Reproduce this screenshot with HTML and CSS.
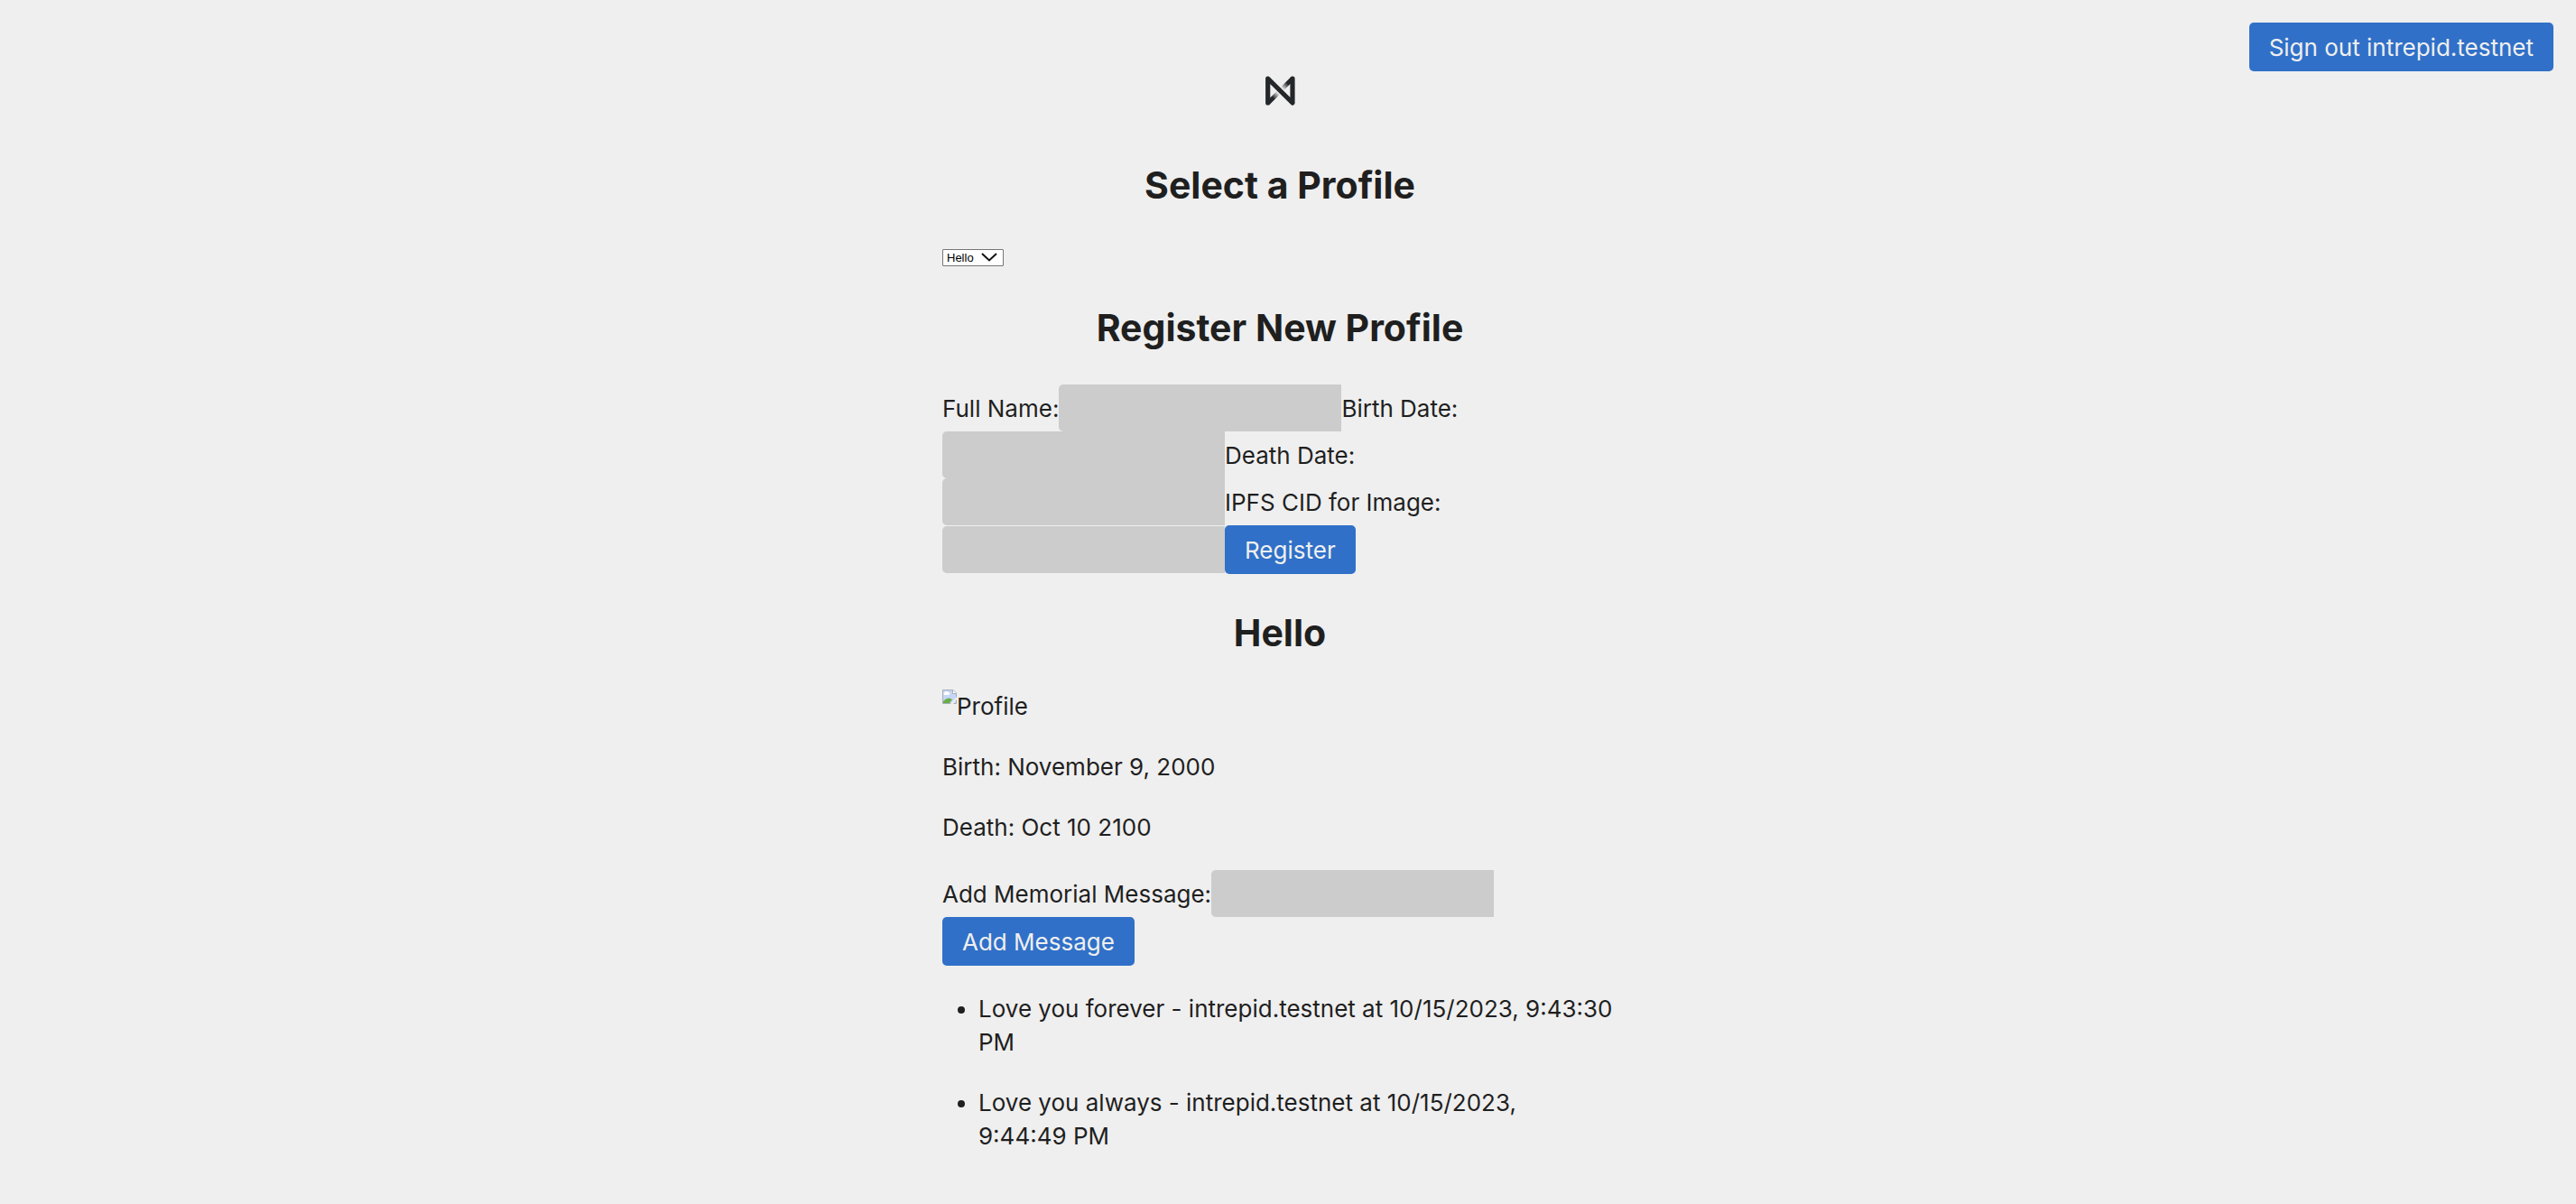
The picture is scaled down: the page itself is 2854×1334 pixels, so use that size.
FILE: index.html
```html
<!DOCTYPE html>
<html lang="en">
<head>
<meta charset="utf-8">
<title>Profiles</title>
<link rel="stylesheet" href="styles.css">
</head>
<body>
<header class="topbar"><button class="button" type="button">Sign out intrepid.testnet</button></header>
<main class="content">
  <svg class="logo" viewBox="0 0 33 33" aria-hidden="true">
    <defs>
      <linearGradient id="fade" gradientUnits="userSpaceOnUse" x1="3" y1="30" x2="30" y2="3">
        <stop offset="0.2" stop-color="#24272a"/>
        <stop offset="0.42" stop-color="#24272a" stop-opacity="0"/>
        <stop offset="0.58" stop-color="#24272a" stop-opacity="0"/>
        <stop offset="0.8" stop-color="#24272a"/>
      </linearGradient>
    </defs>
    <path d="M3 30 30 3" fill="none" stroke="url(#fade)" stroke-width="5"/>
    <path d="M2.700 30V3L30 30V3" fill="none" stroke="#24272a" stroke-width="5.200" stroke-linecap="round" stroke-linejoin="round"/>
  </svg>
  <h1 class="title">Select a Profile</h1>
  <div class="picker">
    <select class="select" aria-label="Profile"><option>Hello</option></select>
    <svg class="chevron" viewBox="0 0 18 10" aria-hidden="true"><path d="M1 1 9 8.500 17 1" fill="none" stroke="#111" stroke-width="2"/></svg>
  </div>
  <h1 class="title">Register New Profile</h1>
  <form class="form">
    <label for="name">Full Name:</label><input class="field" id="name" type="text">
    <label for="birth">Birth Date:</label><input class="field" id="birth" type="text">
    <label for="death">Death Date:</label><input class="field" id="death" type="text">
    <label for="cid">IPFS CID for Image:</label><input class="field" id="cid" type="text">
    <button class="button" type="button">Register</button>
  </form>
  <h1 class="title">Hello</h1>
  <div class="portrait">
    <svg class="missing" viewBox="0 0 16 16" aria-hidden="true">
      <path d="M.5.5H12L15.500 4V15.500H.5Z" fill="#c6d6f7" stroke="#a9adb5"/>
      <path d="M3 6a1.500 1.500 0 0 1 0-3 2 2 0 0 1 3.500 0A1.500 1.500 0 0 1 7 6Z" fill="#fff"/>
      <path d="M1 15V13Q6 7 11 11L8 15Z" fill="#69ad48"/>
      <path d="M9 16 16 8V11L12 16Z" fill="#efefef"/>
      <path d="M11.500.5V4.500H15.500" fill="#fff" stroke="#a9adb5"/>
    </svg>
    <span>Profile</span>
  </div>
  <p class="line">Birth: November 9, 2000</p>
  <p class="line">Death: Oct 10 2100</p>
  <form class="form">
    <label for="message">Add Memorial Message:</label><input class="field" id="message" type="text">
    <button class="button" type="button">Add Message</button>
  </form>
  <ul class="messages">
    <li>Love you forever - intrepid.testnet at 10/15/2023, 9:43:30 PM</li>
    <li>Love you always - intrepid.testnet at 10/15/2023, <span class="time">9:44:49 PM</span></li>
  </ul>
</main>
</body>
</html>
```
FILE: styles.css
```css
* { box-sizing: border-box; }
body {
  margin: 0;
  padding-right: 18px;
  background: #efefef;
  color: #1f1f1f;
  font-family: Inter, "Liberation Sans", sans-serif;
  font-size: 26px;
  line-height: 37px;
}
.topbar {
  display: flex;
  justify-content: flex-end;
  padding: 25px 7px 5px;
}
.button {
  height: 54px;
  padding: 0 22px;
  border: 0;
  border-radius: 5px;
  background: #3070c8;
  color: #efefef;
  font: inherit;
}
.content {
  max-width: 748px;
  margin: 0 auto;
}
.logo {
  display: block;
  width: 33px;
  height: 33px;
  margin: 0 auto 60px;
}
.title {
  margin: 37px 0 35px;
  font-size: 41px;
  line-height: 56px;
  font-weight: 700;
  text-align: center;
}
.picker {
  display: grid;
  justify-content: start;
  align-items: center;
  height: 30px;
  padding-top: 4px;
}
.select {
  grid-area: 1 / 1;
  appearance: none;
  width: 68px;
  height: 19px;
  padding: 0 4px;
  border: 1px solid #767676;
  border-radius: 1px;
  background: #fff;
  color: #000;
  font: 13px/17px "Liberation Sans", sans-serif;
}
.chevron {
  grid-area: 1 / 1;
  justify-self: end;
  width: 18px;
  height: 10px;
  margin-right: 7px;
  pointer-events: none;
}
.form {
  display: flex;
  flex-wrap: wrap;
  align-items: center;
}
.field {
  width: 313px;
  height: 52px;
  padding: 0 14px;
  border: 0;
  border-radius: 5px 0 0 5px;
  background: #ccc;
  color: inherit;
  font: inherit;
}
.portrait {
  display: flex;
  align-items: flex-start;
}
.missing {
  width: 16px;
  height: 16px;
}
.line { margin: 30px 0 29px; }
.messages {
  margin: 29px 0;
  padding-left: 40px;
}
.messages li { margin-bottom: 30px; }
.time { white-space: nowrap; }
```
